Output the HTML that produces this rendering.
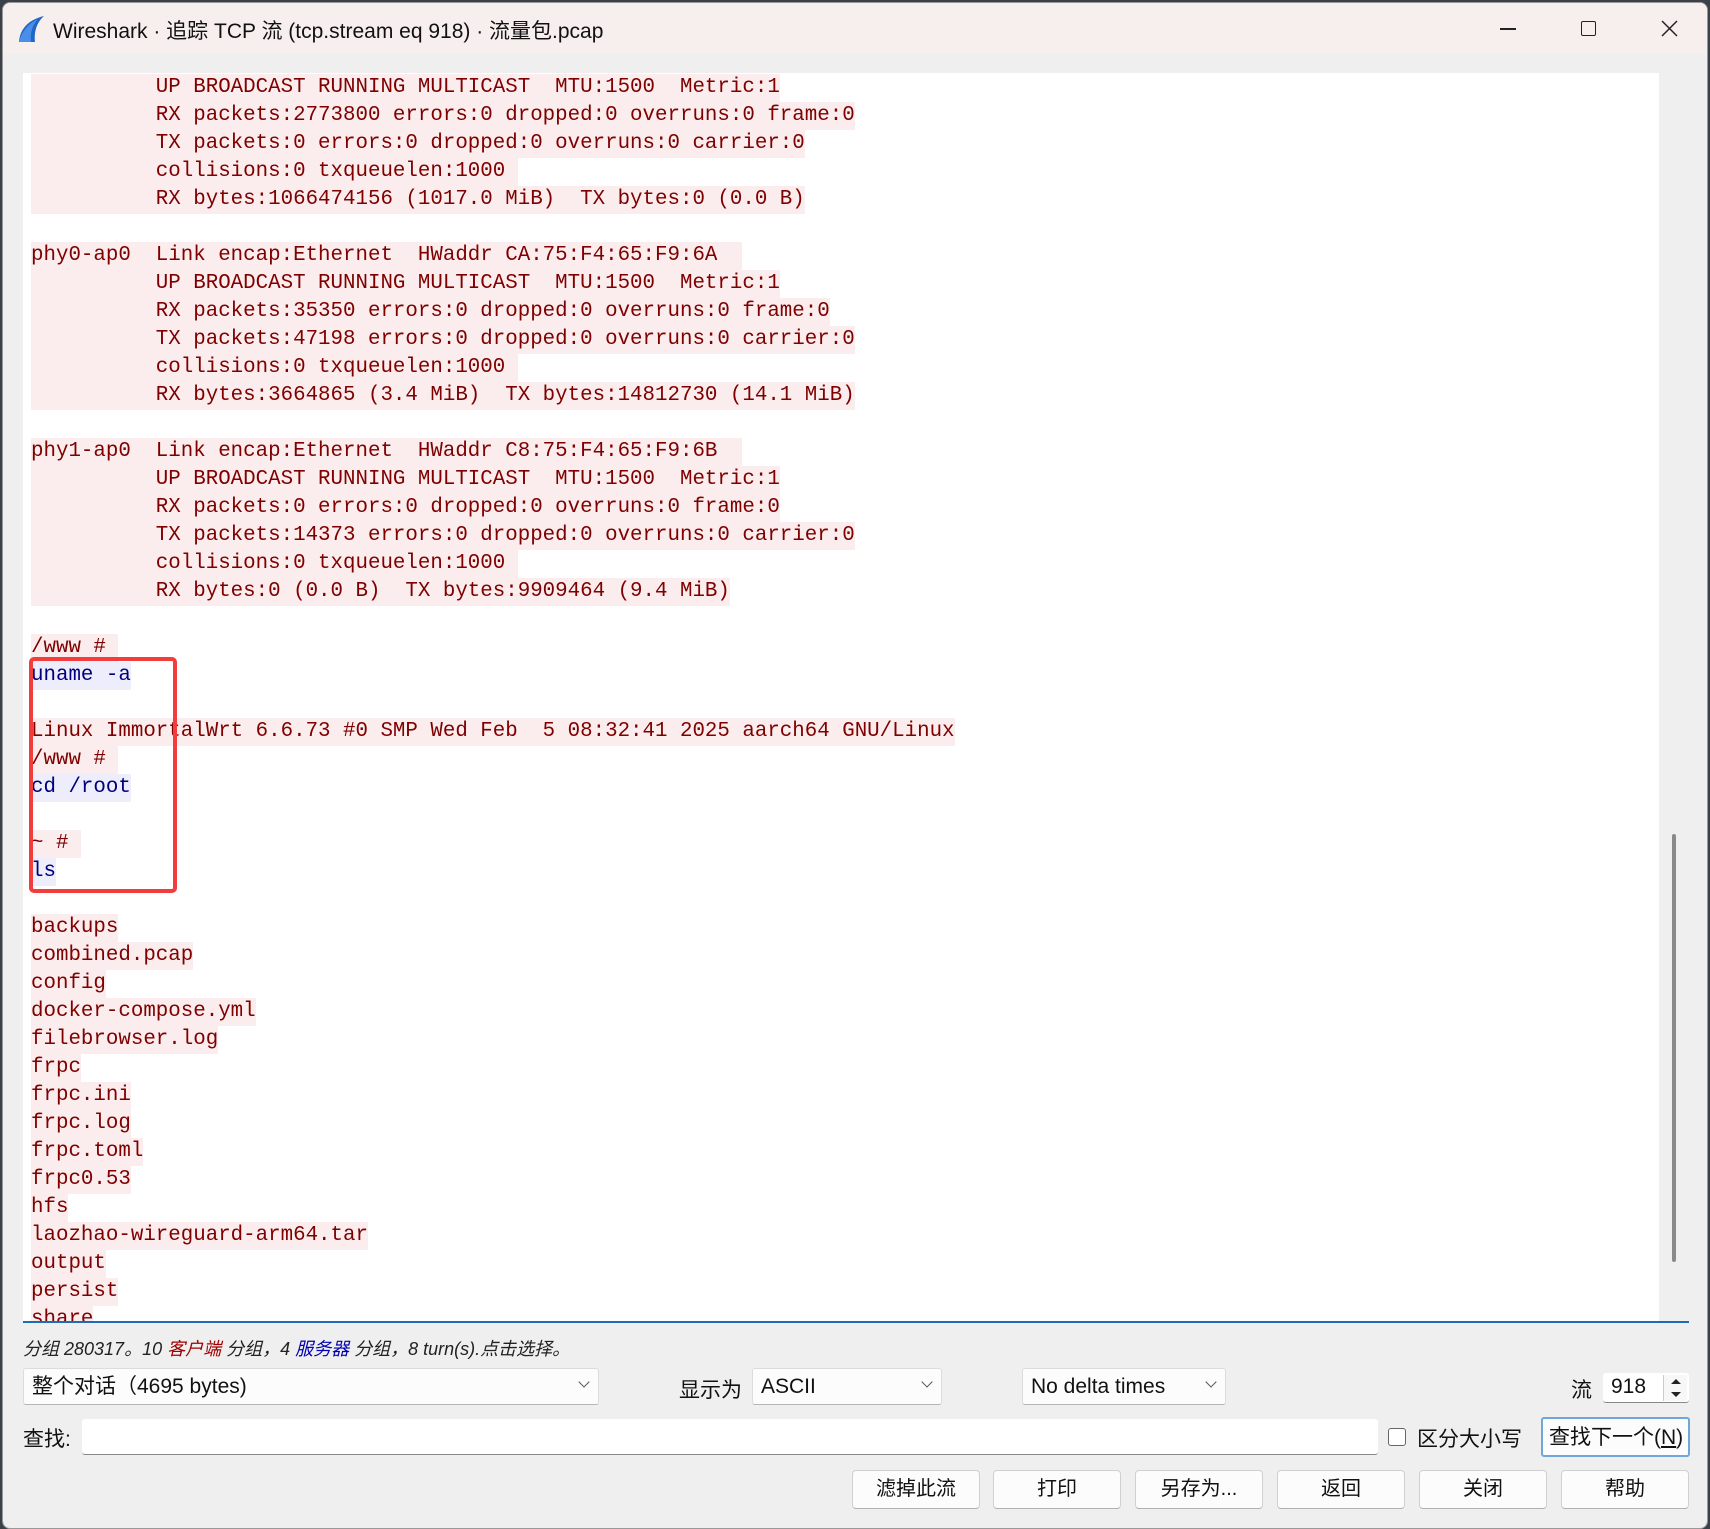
<!DOCTYPE html>
<html><head><meta charset="utf-8"><style>
*{margin:0;padding:0;box-sizing:border-box}
body{width:1710px;height:1529px;background:#3a4148;position:relative;overflow:hidden;font-family:"Liberation Sans","Noto Sans CJK SC",sans-serif}
#win{position:absolute;left:2px;top:2px;width:1706px;height:1527px;background:#efefef;border-radius:8px;overflow:hidden;border:1px solid #999}
#title{position:absolute;left:0;top:0;width:100%;height:51px;background:#f7efee}
#title .t{position:absolute;left:50px;top:12px;font-size:21px;color:#111;white-space:nowrap}
#ta{position:absolute;left:20px;top:70px;width:1666px;height:1250px;background:#fff;border-bottom:2px solid #1e6bb8;overflow:hidden}
#sb{position:absolute;right:0;top:0;width:30px;height:100%;background:#efefef}
#thumb{position:absolute;left:13px;top:761px;width:4px;height:428px;background:#8a8a8a;border-radius:2px}
#txt{position:absolute;left:8px;top:1px;font-family:"Liberation Mono",monospace;font-size:20.8px;line-height:28px}
.l{height:28px;white-space:pre}
.c span{display:inline-block;height:28px;background:#fbeded;color:#7f0000}
.s span{display:inline-block;height:28px;background:#ededfb;color:#00007f}
#red{position:absolute;left:26px;top:654px;width:148px;height:236px;border:4px solid #f33c3c;border-radius:5px}
.lab{position:absolute;font-size:21px;color:#111;white-space:nowrap}
.box{position:absolute;background:#fcfcfc;border:1px solid #dcdcdc;border-bottom:1px solid #b5b5b5;border-radius:3px;font-size:21px;color:#111;white-space:nowrap;padding-left:8px}
.btn{position:absolute;top:1467px;width:128px;height:39px;background:#fcfcfc;border:1px solid #d0d0d0;border-bottom-color:#b0b0b0;border-radius:4px;font-size:20px;text-align:center;line-height:37px;color:#111}
.chev{position:absolute;right:10px;top:9px;width:8px;height:8px;border-right:1.3px solid #555;border-bottom:1.3px solid #555;transform:rotate(45deg)}
</style></head><body>
<div id="win">
<div id="title">
<svg style="position:absolute;left:13px;top:12px" width="30" height="28" viewBox="0 0 30 28"><path d="M3 27 C4 14 12 5 28 1 C20 8 18 18 19 27 Z" fill="#1f66c8"/><path d="M3 27 C6 16 12 9 22 4 C16 10 14 19 15 27Z" fill="#4a8ee8"/></svg>
<div class="t">Wireshark · 追踪 TCP 流 (tcp.stream eq 918) · 流量包.pcap</div>
<div style="position:absolute;left:1497px;top:25px;width:16px;height:1.5px;background:#222"></div>
<div style="position:absolute;left:1578px;top:18px;width:15px;height:15px;border:1.5px solid #222;border-radius:2px"></div>
<svg style="position:absolute;left:1658px;top:17px" width="17" height="17"><path d="M1 1L16 16M16 1L1 16" stroke="#222" stroke-width="1.5"/></svg>
</div>
<div id="ta">
<div id="txt"><div class="l c"><span>          UP BROADCAST RUNNING MULTICAST  MTU:1500  Metric:1</span></div><div class="l c"><span>          RX packets:2773800 errors:0 dropped:0 overruns:0 frame:0</span></div><div class="l c"><span>          TX packets:0 errors:0 dropped:0 overruns:0 carrier:0</span></div><div class="l c"><span>          collisions:0 txqueuelen:1000 </span></div><div class="l c"><span>          RX bytes:1066474156 (1017.0 MiB)  TX bytes:0 (0.0 B)</span></div><div class="l"></div><div class="l c"><span>phy0-ap0  Link encap:Ethernet  HWaddr CA:75:F4:65:F9:6A  </span></div><div class="l c"><span>          UP BROADCAST RUNNING MULTICAST  MTU:1500  Metric:1</span></div><div class="l c"><span>          RX packets:35350 errors:0 dropped:0 overruns:0 frame:0</span></div><div class="l c"><span>          TX packets:47198 errors:0 dropped:0 overruns:0 carrier:0</span></div><div class="l c"><span>          collisions:0 txqueuelen:1000 </span></div><div class="l c"><span>          RX bytes:3664865 (3.4 MiB)  TX bytes:14812730 (14.1 MiB)</span></div><div class="l"></div><div class="l c"><span>phy1-ap0  Link encap:Ethernet  HWaddr C8:75:F4:65:F9:6B  </span></div><div class="l c"><span>          UP BROADCAST RUNNING MULTICAST  MTU:1500  Metric:1</span></div><div class="l c"><span>          RX packets:0 errors:0 dropped:0 overruns:0 frame:0</span></div><div class="l c"><span>          TX packets:14373 errors:0 dropped:0 overruns:0 carrier:0</span></div><div class="l c"><span>          collisions:0 txqueuelen:1000 </span></div><div class="l c"><span>          RX bytes:0 (0.0 B)  TX bytes:9909464 (9.4 MiB)</span></div><div class="l"></div><div class="l c"><span>/www # </span></div><div class="l s"><span>uname -a</span></div><div class="l"></div><div class="l c"><span>Linux ImmortalWrt 6.6.73 #0 SMP Wed Feb  5 08:32:41 2025 aarch64 GNU/Linux</span></div><div class="l c"><span>/www # </span></div><div class="l s"><span>cd /root</span></div><div class="l"></div><div class="l c"><span>~ # </span></div><div class="l s"><span>ls</span></div><div class="l"></div><div class="l c"><span>backups</span></div><div class="l c"><span>combined.pcap</span></div><div class="l c"><span>config</span></div><div class="l c"><span>docker-compose.yml</span></div><div class="l c"><span>filebrowser.log</span></div><div class="l c"><span>frpc</span></div><div class="l c"><span>frpc.ini</span></div><div class="l c"><span>frpc.log</span></div><div class="l c"><span>frpc.toml</span></div><div class="l c"><span>frpc0.53</span></div><div class="l c"><span>hfs</span></div><div class="l c"><span>laozhao-wireguard-arm64.tar</span></div><div class="l c"><span>output</span></div><div class="l c"><span>persist</span></div><div class="l c"><span>share</span></div></div>
<div id="sb"><div id="thumb"></div></div>
</div>
<div id="red"></div>
<div class="lab" style="left:20px;top:1332px;font-size:18px;font-style:italic;color:#222">分组 280317。10 <span style="color:#a00000">客户端</span> 分组，4 <span style="color:#0000b0">服务器</span> 分组，8 turn(s).点击选择。</div>
<div class="box" style="left:20px;top:1365px;width:576px;height:37px;line-height:35px">整个对话（4695 bytes)<div class="chev"></div></div>
<div class="lab" style="left:676px;top:1371px">显示为</div>
<div class="box" style="left:749px;top:1365px;width:190px;height:37px;line-height:35px">ASCII<div class="chev"></div></div>
<div class="box" style="left:1019px;top:1365px;width:204px;height:37px;line-height:35px">No delta times<div class="chev"></div></div>
<div class="lab" style="left:1568px;top:1371px">流</div>
<div class="box" style="left:1600px;top:1370px;width:86px;height:30px;line-height:28px;border:none;border-bottom:1px solid #888;background:#fff">918</div>
<div style="position:absolute;left:1660px;top:1372px;width:24px;height:26px;border-left:1px solid #ccc;background:#f7f7f7"><svg width="24" height="26"><path d="M7 9L12 4L17 9Z M7 17L12 22L17 17Z" fill="#222"/></svg></div>
<div class="lab" style="left:20px;top:1420px">查找:</div>
<div style="position:absolute;left:79px;top:1416px;width:1296px;height:36px;background:#fff;border-bottom:1px solid #888;border-radius:3px"></div>
<div style="position:absolute;left:1385px;top:1425px;width:18px;height:18px;border:1px solid #666;border-radius:3px;background:#fff"></div>
<div class="lab" style="left:1414px;top:1420px">区分大小写</div>
<div class="box" style="left:1538px;top:1414px;width:149px;height:40px;line-height:38px;border:2px solid #6fa6dc;padding-left:6px">查找下一个(<u>N</u>)</div>
<div class="btn" style="left:849px">滤掉此流</div>
<div class="btn" style="left:990px">打印</div>
<div class="btn" style="left:1132px">另存为...</div>
<div class="btn" style="left:1274px">返回</div>
<div class="btn" style="left:1416px">关闭</div>
<div class="btn" style="left:1558px">帮助</div>
</div>
</body></html>
